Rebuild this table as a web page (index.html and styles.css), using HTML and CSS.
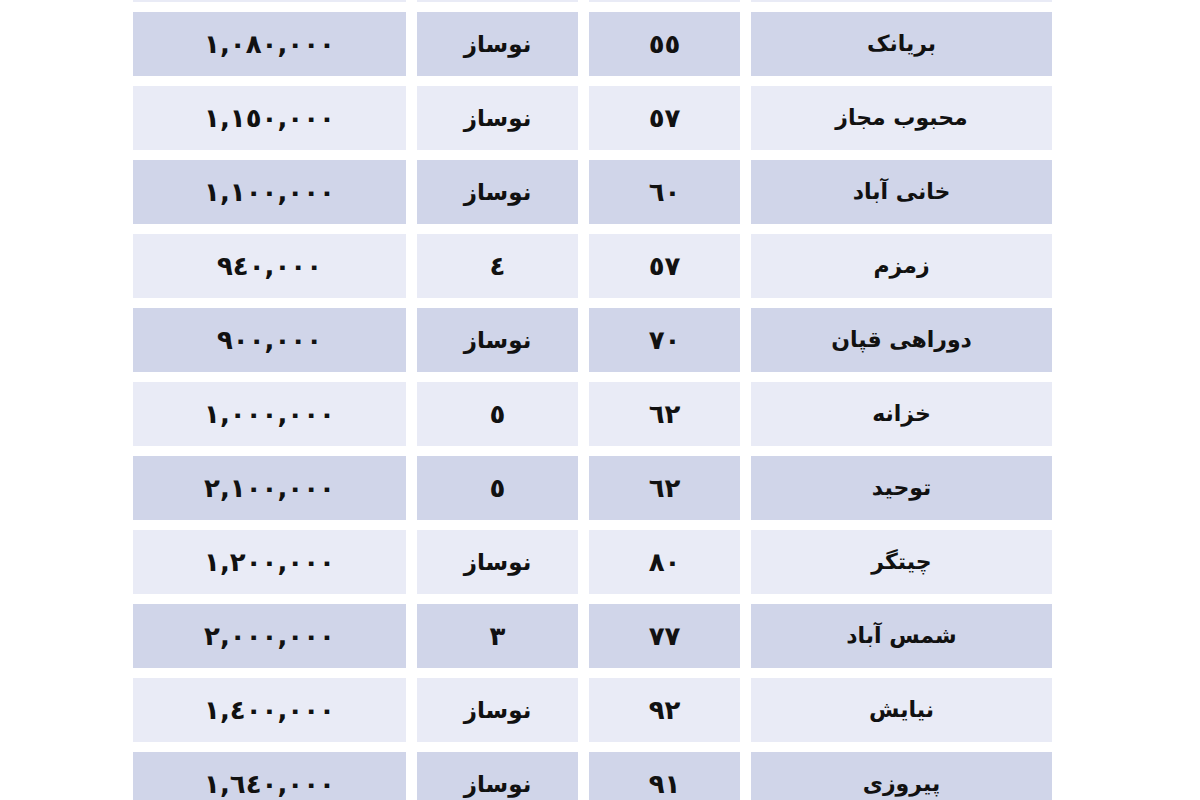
FILE: index.html
```html
<!DOCTYPE html>
<html lang="fa" dir="rtl">
<head>
<meta charset="utf-8">
<title>قیمت آپارتمان</title>
<link rel="stylesheet" href="styles.css">
</head>
<body>
<div class="page">
  <div class="table">
    <div class="row light cut"><div class="cell"></div><div class="cell"></div><div class="cell"></div><div class="cell"></div></div>
    <div class="row dark"><div class="cell name">بریانک</div><div class="cell num">٥٥</div><div class="cell">نوساز</div><div class="cell num">١,٠٨٠,٠٠٠</div></div>
    <div class="row light"><div class="cell name">محبوب مجاز</div><div class="cell num">٥٧</div><div class="cell">نوساز</div><div class="cell num">١,١٥٠,٠٠٠</div></div>
    <div class="row dark"><div class="cell name">خانی آباد</div><div class="cell num">٦٠</div><div class="cell">نوساز</div><div class="cell num">١,١٠٠,٠٠٠</div></div>
    <div class="row light"><div class="cell name">زمزم</div><div class="cell num">٥٧</div><div class="cell num">٤</div><div class="cell num">٩٤٠,٠٠٠</div></div>
    <div class="row dark"><div class="cell name">دوراهی قپان</div><div class="cell num">٧٠</div><div class="cell">نوساز</div><div class="cell num">٩٠٠,٠٠٠</div></div>
    <div class="row light"><div class="cell name">خزانه</div><div class="cell num">٦٢</div><div class="cell num">٥</div><div class="cell num">١,٠٠٠,٠٠٠</div></div>
    <div class="row dark"><div class="cell name">توحید</div><div class="cell num">٦٢</div><div class="cell num">٥</div><div class="cell num">٢,١٠٠,٠٠٠</div></div>
    <div class="row light"><div class="cell name">چیتگر</div><div class="cell num">٨٠</div><div class="cell">نوساز</div><div class="cell num">١,٢٠٠,٠٠٠</div></div>
    <div class="row dark"><div class="cell name">شمس آباد</div><div class="cell num">٧٧</div><div class="cell num">٣</div><div class="cell num">٢,٠٠٠,٠٠٠</div></div>
    <div class="row light"><div class="cell name">نیایش</div><div class="cell num">٩٢</div><div class="cell">نوساز</div><div class="cell num">١,٤٠٠,٠٠٠</div></div>
    <div class="row dark"><div class="cell name">پیروزی</div><div class="cell num">٩١</div><div class="cell">نوساز</div><div class="cell num">١,٦٤٠,٠٠٠</div></div>
  </div>
</div>
</body>
</html>
```
FILE: styles.css
```css
html, body {
  margin: 0;
  padding: 0;
  background: #ffffff;
  overflow: hidden;
}
.page {
  width: 1200px;
  height: 800px;
  overflow: hidden;
  box-sizing: border-box;
  padding-right: 148px;
  font-family: "DejaVu Sans", "Noto Sans", sans-serif;
  color: #111111;
}
.table {
  display: flex;
  flex-direction: column;
  gap: 10px;
  margin-top: -62px;
}
.row {
  display: grid;
  grid-template-columns: 301px 151px 161px 273px;
  column-gap: 11px;
  height: 64px;
  flex-shrink: 0;
}
.cell {
  display: flex;
  align-items: center;
  justify-content: center;
  font-size: 23px;
  font-weight: bold;
  line-height: 1;
}
.name { font-size: 22px; }
.num { font-size: 26px; }
.dark .cell { background: #d0d5e9; }
.light .cell { background: #e9ebf6; }
```
